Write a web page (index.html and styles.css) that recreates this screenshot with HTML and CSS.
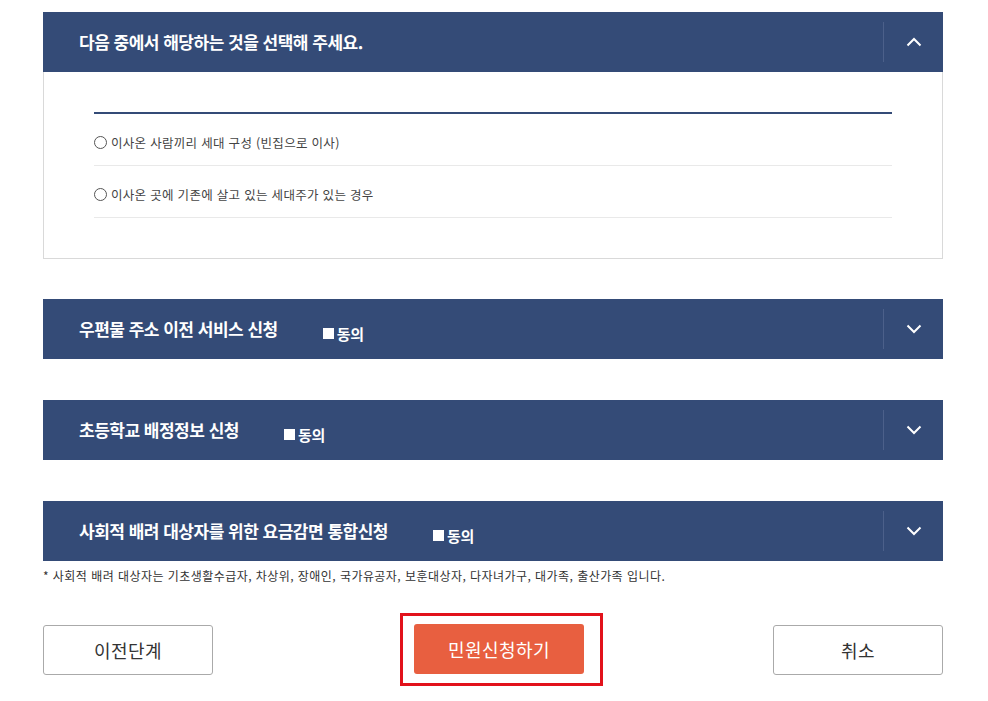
FILE: index.html
```html
<!DOCTYPE html>
<html lang="ko">
<head>
<meta charset="utf-8">
<title>민원신청</title>
<link rel="stylesheet" href="styles.css">
</head>
<body>
<div class="wrap">
  <section class="acc open">
    <div class="acc-head">
      <h3 class="acc-title">다음 중에서 해당하는 것을 선택해 주세요.</h3>
      <span class="acc-sep"></span>
      <span class="acc-toggle"><svg width="16" height="10" viewBox="0 0 16 10"><path d="M1.5 8.5 L8 2 L14.5 8.5" fill="none" stroke="#fff" stroke-width="2"/></svg></span>
    </div>
    <div class="acc-body">
      <ul class="opts">
        <li class="opt"><span class="radio"></span>이사온 사람끼리 세대 구성 (빈집으로 이사)</li>
        <li class="opt"><span class="radio"></span>이사온 곳에 기존에 살고 있는 세대주가 있는 경우</li>
      </ul>
    </div>
  </section>

  <section class="acc">
    <div class="acc-head">
      <h3 class="acc-title">우편물 주소 이전 서비스 신청</h3>
      <span class="agree"><span class="sq"></span>동의</span>
      <span class="acc-sep"></span>
      <span class="acc-toggle"><svg width="16" height="10" viewBox="0 0 16 10"><path d="M1.5 1.5 L8 8 L14.5 1.5" fill="none" stroke="#fff" stroke-width="2"/></svg></span>
    </div>
  </section>

  <section class="acc">
    <div class="acc-head">
      <h3 class="acc-title">초등학교 배정정보 신청</h3>
      <span class="agree"><span class="sq"></span>동의</span>
      <span class="acc-sep"></span>
      <span class="acc-toggle"><svg width="16" height="10" viewBox="0 0 16 10"><path d="M1.5 1.5 L8 8 L14.5 1.5" fill="none" stroke="#fff" stroke-width="2"/></svg></span>
    </div>
  </section>

  <section class="acc last">
    <div class="acc-head">
      <h3 class="acc-title">사회적 배려 대상자를 위한 요금감면 통합신청</h3>
      <span class="agree"><span class="sq"></span>동의</span>
      <span class="acc-sep"></span>
      <span class="acc-toggle"><svg width="16" height="10" viewBox="0 0 16 10"><path d="M1.5 1.5 L8 8 L14.5 1.5" fill="none" stroke="#fff" stroke-width="2"/></svg></span>
    </div>
  </section>
  <p class="note">* 사회적 배려 대상자는 기초생활수급자, 차상위, 장애인, 국가유공자, 보훈대상자, 다자녀가구, 대가족, 출산가족 입니다.</p>

  <div class="actions">
    <button class="btn btn-line">이전단계</button>
    <div class="highlight"><button class="btn btn-main">민원신청하기</button></div>
    <button class="btn btn-line btn-right">취소</button>
  </div>
</div>
</body>
</html>
```

FILE: styles.css
```css
* { box-sizing: border-box; }
html, body { margin: 0; padding: 0; background: #fff; }
body {
  font-family: "Noto Sans CJK KR", "Noto Sans", sans-serif;
  color: #333;
}
.wrap {
  width: 900px;
  margin-left: 43px;
  padding-top: 12px;
}
.acc { margin-bottom: 41px; }
.acc.open { margin-bottom: 40px; }
.acc.last { margin-bottom: 0; }
.acc-head {
  height: 60px;
  background: #344b77;
  display: flex;
  align-items: center;
  padding-left: 36px;
}
.acc-title {
  margin: 0;
  font-size: 17px;
  font-weight: 700;
  letter-spacing: -0.5px;
  color: #fff;
  line-height: 20px;
}
.agree {
  display: flex;
  align-items: center;
  margin-left: 45px;
  margin-top: 8px;
  color: #fff;
  font-size: 15px;
  font-weight: 700;
  letter-spacing: -0.3px;
}
.sq {
  width: 11px;
  height: 11px;
  background: #fff;
  margin-right: 3px;
}
.acc-sep {
  margin-left: auto;
  width: 1px;
  height: 40px;
  background: #4c608a;
}
.acc-toggle {
  width: 59px;
  display: flex;
  justify-content: center;
  align-items: center;
}
.acc-toggle svg { display: block; }
.acc-body {
  border: 1px solid #d9d9d9;
  border-top: 0;
  padding: 40px 50px 41px;
  height: 187px;
}
.opts {
  list-style: none;
  margin: 0;
  padding: 0;
  border-top: 2px solid #344b77;
}
.opt {
  display: flex;
  align-items: center;
  height: 52px;
  padding-top: 5px;
  border-bottom: 1px solid #e9e9e9;
  font-size: 12.5px;
  color: #444;
  letter-spacing: 0.3px;
}
.radio {
  width: 13px;
  height: 13px;
  border: 1px solid #555;
  border-radius: 50%;
  margin-right: 4px;
  flex: none;
}
.note {
  margin: 7px 0 0;
  font-size: 12px;
  color: #333;
  line-height: 16px;
  letter-spacing: 0.45px;
}
.actions {
  display: flex;
  align-items: center;
  margin-top: 29px;
}
.btn {
  width: 170px;
  height: 50px;
  border-radius: 3px;
  font-family: "Noto Sans CJK KR", "Noto Sans", sans-serif;
  font-size: 18px;
  letter-spacing: 0.4px;
  cursor: pointer;
}
.btn-line {
  background: #fff;
  border: 1px solid #aaa;
  color: #333;
}
.btn-right { margin-left: auto; }
.btn-main {
  background: #e85f40;
  border: 0;
  color: #fff;
  display: block;
}
.highlight {
  border: 3px solid #e2121b;
  padding: 8px 16px 9px 11px;
  margin-left: 187px;
}
```
